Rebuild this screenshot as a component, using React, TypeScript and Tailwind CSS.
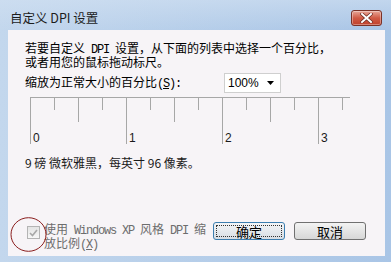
const latin = "font-['Liberation_Mono','Noto_Sans_CJK_SC',monospace] tracking-[-1.2px] whitespace-pre";

const ticks = [
  { x: 0, h: 47 },
  { x: 24, h: 13 },
  { x: 48, h: 25 },
  { x: 72, h: 13 },
  { x: 96, h: 47 },
  { x: 120, h: 13 },
  { x: 144, h: 25 },
  { x: 168, h: 13 },
  { x: 192, h: 47 },
  { x: 216, h: 13 },
  { x: 240, h: 25 },
  { x: 264, h: 13 },
  { x: 288, h: 47 },
  { x: 312, h: 13 },
];

function CloseButton() {
  return (
    <div className="mr-[9px] mt-[10px] flex h-[16px] w-[31px] items-center justify-center rounded-[3px] border border-[#7a3127] bg-gradient-to-b from-[#e7a698] via-[#d05a45] to-[#c0402b] shadow-[inset_0_0_0_1px_rgba(255,255,255,0.35)]">
      <svg width="13" height="10" viewBox="0 0 13 10">
        <path d="M2 1 L11 9 M11 1 L2 9" stroke="#6b2b22" strokeWidth="3.4" strokeLinecap="square" />
        <path d="M2 1 L11 9 M11 1 L2 9" stroke="#ffffff" strokeWidth="2" strokeLinecap="square" />
      </svg>
    </div>
  );
}

function Ruler() {
  return (
    <div className="relative ml-[5px] mt-[4px] h-[48px] w-[321px]">
      <svg width="321" height="48" className="absolute left-0 top-0">
        <line x1="0" y1="0.5" x2="320" y2="0.5" stroke="#a7a7a7" strokeWidth="1" />
        {ticks.map((t) => (
          <line key={t.x} x1={t.x + 0.5} y1="0" x2={t.x + 0.5} y2={t.h} stroke="#a7a7a7" strokeWidth="1" />
        ))}
      </svg>
      {["0", "1", "2", "3"].map((n, i) => (
        <span
          key={n}
          className="absolute top-[35px] font-['Liberation_Sans',sans-serif] text-[12px] leading-[12px] text-[#1a1a1a]"
          style={{ left: 3 + i * 96 }}
        >
          {n}
        </span>
      ))}
    </div>
  );
}

export default function App() {
  return (
    <div className="relative flex h-[262px] w-[391px] flex-col overflow-hidden bg-gradient-to-r from-[#c3d7ed] to-[#a9c5e6] font-['Noto_Sans_CJK_SC',sans-serif]">
      {/* Title bar */}
      <div className="flex h-[30px] shrink-0 items-start justify-between bg-gradient-to-b from-[#d2e1f2]/60 to-transparent">
        <span className="ml-[10px] mt-[11px] text-[12.5px] leading-[14px] text-[#1c1c1c]">自定义 DPI 设置</span>
        <CloseButton />
      </div>

      {/* Client area */}
      <div className="mb-[6px] ml-[8px] mr-[6px] flex flex-1 flex-col bg-[#f7f4f7] pl-[17px] text-black">
        <p className="mt-[12px] text-[12px] leading-[12px]">
          若要自定义<span className={latin}>{" DPI "}</span>设置，从下面的列表中选择一个百分比，
          <br />
          或者用您的鼠标拖动标尺。
        </p>

        <div className="mt-[5px] flex h-[20px] items-center">
          <span className="w-[199px] text-[12px] leading-[12px]">
            缩放为正常大小的百分比<span className={latin}>(<span className="underline">S</span>):</span>
          </span>
          <div className="flex h-[20px] w-[57px] items-center justify-between border border-[#cfcfcf] bg-white pl-[3px] pr-[6px]">
            <span className="font-['Liberation_Sans',sans-serif] text-[12px] leading-[12px]">100%</span>
            <svg width="7" height="4" viewBox="0 0 7 4">
              <path d="M0 0 H7 L3.5 4 Z" fill="#000" />
            </svg>
          </div>
        </div>

        <Ruler />

        <p className="mt-[10px] text-[12px] leading-[16px] text-[#1a1a1a]">9 磅 微软雅黑，每英寸 96 像素。</p>

        <div className="flex-1" />

        <div className="mb-[5px] flex items-start">
          <div className="ml-[2px] mt-[4px] flex h-[13px] w-[13px] shrink-0 items-center justify-center border border-[#b4b4b4] bg-gradient-to-b from-[#e4e4e4] to-[#f7f7f7]">
            <svg width="9" height="8" viewBox="0 0 9 8">
              <path d="M1 4 L3.5 6.5 L8 1" fill="none" stroke="#a8a8a8" strokeWidth="1.6" />
            </svg>
          </div>
          <span className="ml-[4px] w-[169px] pt-[1px] text-[12px] leading-[12px] text-[#6d6d6d]">
            使用<span className={latin}>{" Windows XP "}</span>风格<span className={latin}>{" DPI "}</span>缩
            <br />
            放比例<span className={latin}>(<span className="underline">X</span>)</span>
          </span>
          <button className="relative flex h-[18px] w-[72px] shrink-0 items-center justify-center rounded-[3px] border border-[#3c7eb0] bg-gradient-to-b from-[#f3f5f7] to-[#d8dde3] text-[13px] leading-[13px] text-black">
            <span className="absolute inset-[2px] border border-dotted border-[#333]" />
            确定
          </button>
          <button className="ml-[9px] flex h-[18px] w-[72px] shrink-0 items-center justify-center rounded-[3px] border border-[#707070] bg-gradient-to-b from-[#f3f3f3] to-[#d7d7d7] text-[13px] leading-[13px] text-black">
            取消
          </button>
        </div>
      </div>

      {/* hand-drawn annotation circle */}
      <svg width="40" height="38" viewBox="0 0 40 38" className="absolute left-[9px] top-[216px]">
        <ellipse cx="19.5" cy="18.5" rx="17.5" ry="16.8" fill="none" stroke="#8a1d1d" strokeWidth="1" />
      </svg>
    </div>
  );
}
